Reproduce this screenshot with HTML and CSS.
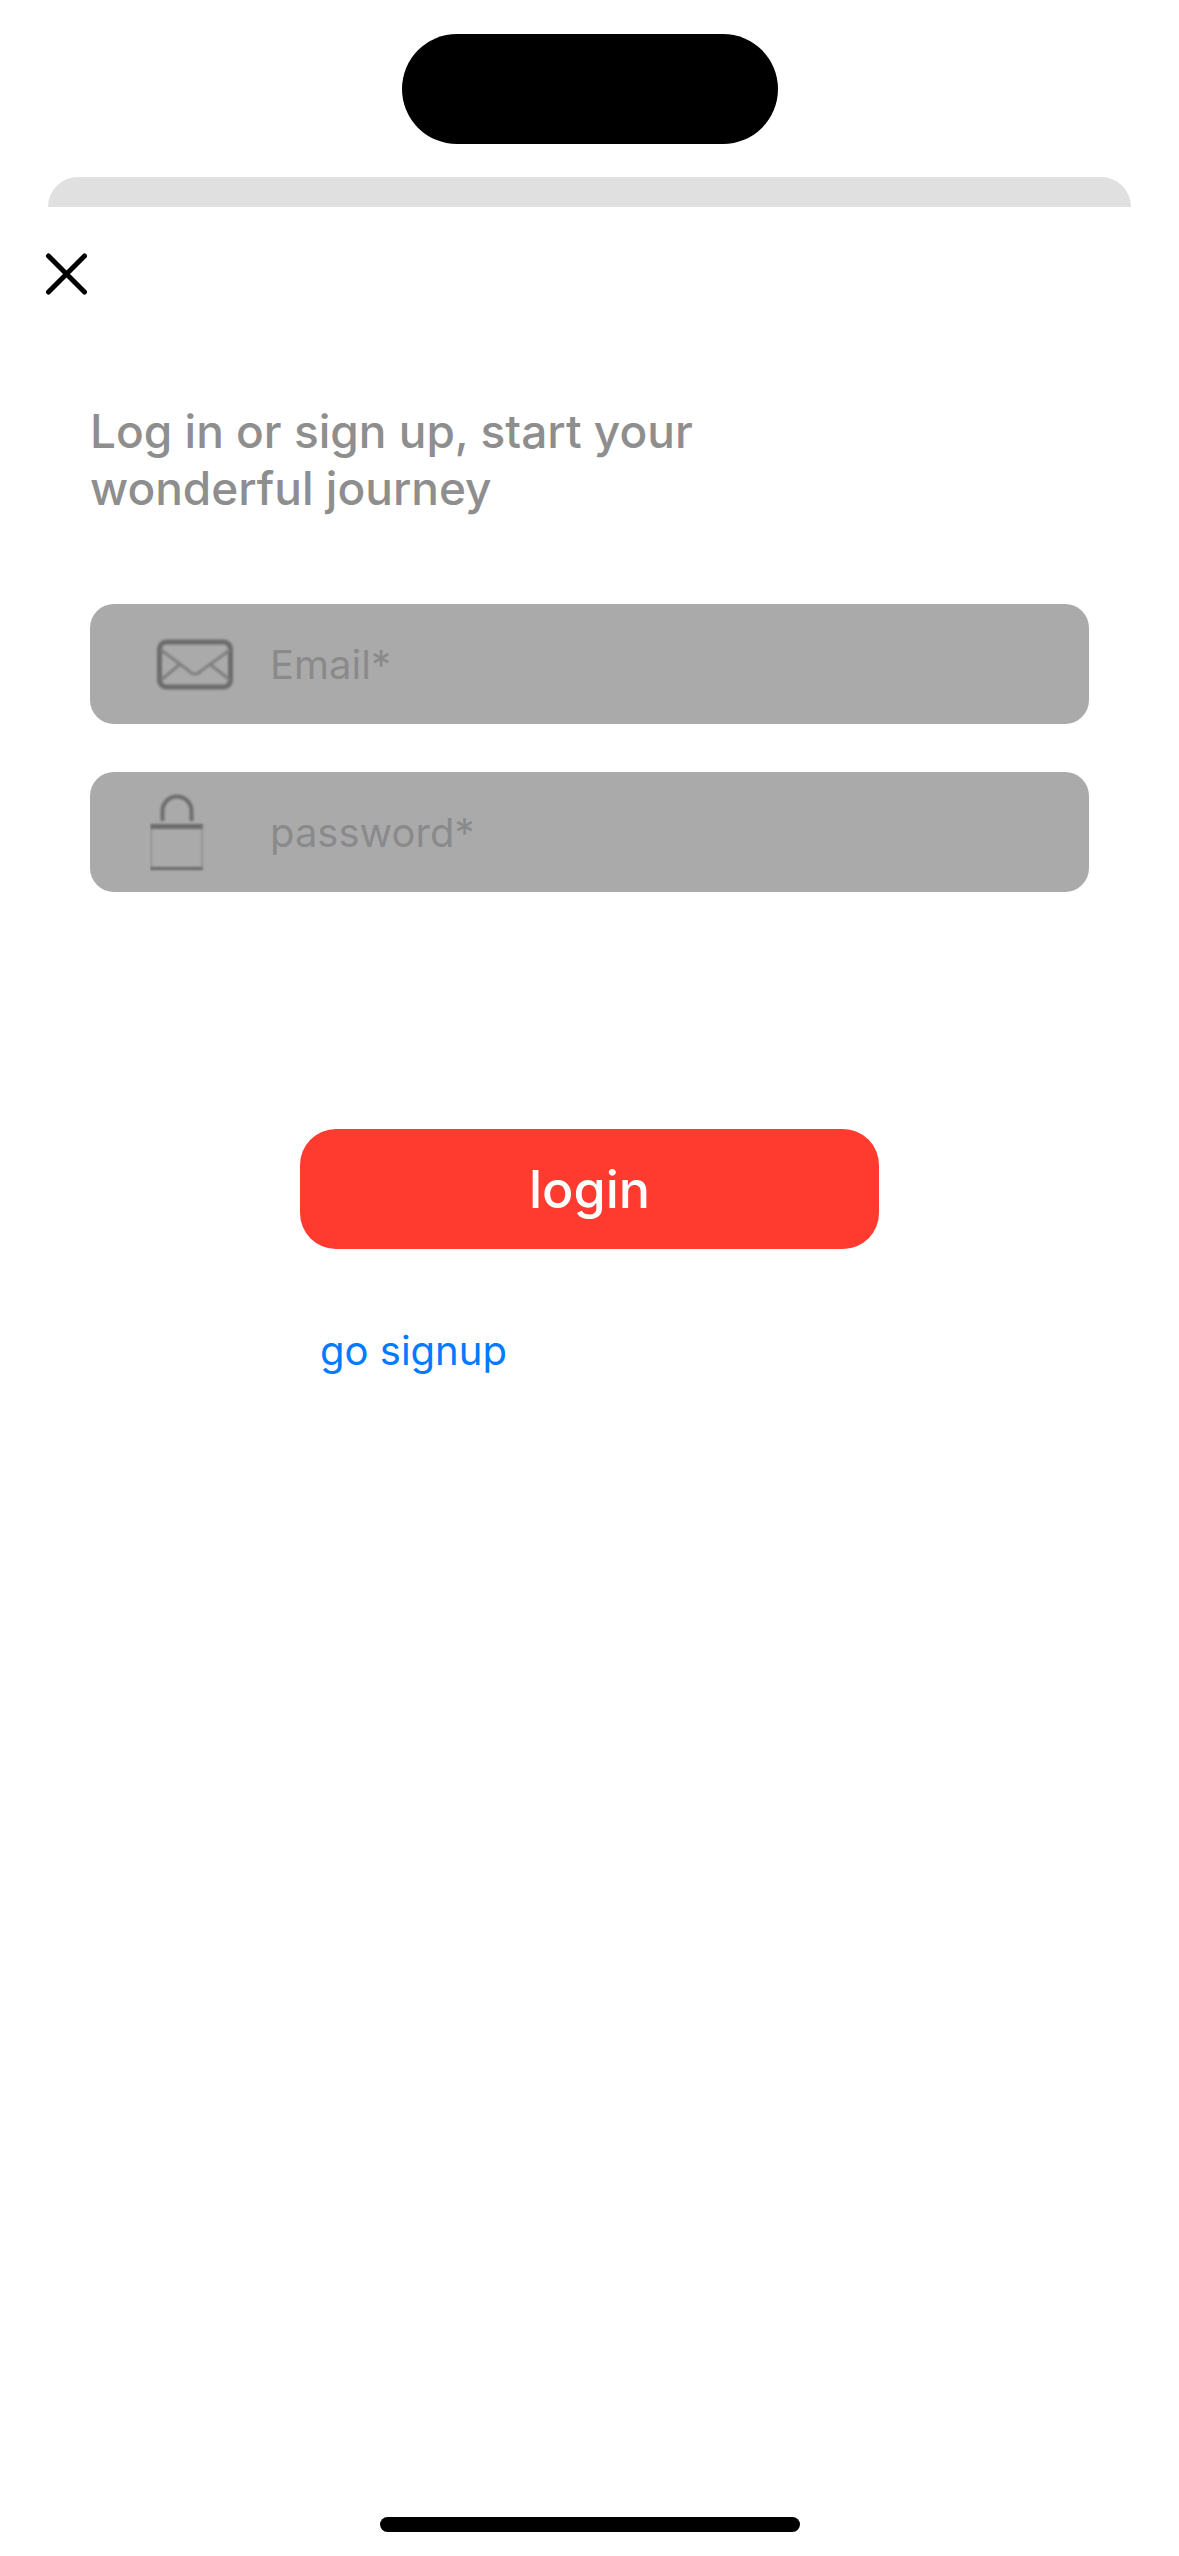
FILE: index.html
```html
<!DOCTYPE html>
<html lang="en">
<head>
  <meta charset="utf-8">
  <meta name="viewport" content="width=device-width, initial-scale=1">
  <title>Log in</title>
  <link rel="stylesheet" href="styles.css">
</head>
<body class="screen">
  <header class="status-bar">
    <div class="island"></div>
  </header>
  <div class="sheet-behind"></div>

  <main class="sheet">
    <button class="close" type="button" aria-label="Close">
      <svg class="close-icon" viewBox="0 0 42 42" aria-hidden="true">
        <path d="M3.500 3 39.500 39M39.500 3 3.500 39"/>
      </svg>
    </button>

    <form class="login-form">
      <h1 class="title">Log in or sign up, start your wonderful journey</h1>

      <div class="fields">
        <label class="field">
          <svg class="field-icon" viewBox="0 0 90 120" aria-hidden="true">
            <g class="soft">
              <rect class="heavy" x="9.500" y="38" width="71" height="45" rx="7"/>
              <path class="light" d="M11 46 38 66Q45 74 52 66L80 46M11 76 29 61M80 76 61 61"/>
            </g>
          </svg>
          <input class="field-input" type="email" placeholder="Email*" aria-label="Email">
        </label>
        <label class="field">
          <svg class="field-icon" viewBox="0 0 90 120" aria-hidden="true">
            <g class="soft">
              <path class="shackle" d="M12.500 49V39a14.500 14.500 0 0 1 29 0V49"/>
              <path class="heavy" d="M0 54.500H53"/>
              <path class="base" d="M0 96.500H53"/>
              <path class="side" d="M1 54V97M52 54V97"/>
            </g>
          </svg>
          <input class="field-input" type="password" placeholder="password*" aria-label="Password">
        </label>
      </div>

      <div class="actions">
        <button class="login" type="submit">login</button>
        <a class="signup" href="#signup">go signup</a>
      </div>
    </form>
  </main>

  <div class="home-indicator"></div>
</body>
</html>
```
FILE: styles.css
```css
* {
  box-sizing: border-box;
}

.screen {
  display: flex;
  flex-direction: column;
  min-height: 100vh;
  margin: 0;
  background: #fff;
  font-family: Inter, "Liberation Sans", sans-serif;
}

.status-bar {
  display: flex;
  justify-content: center;
  padding: 34px 0 33px;
}

.island {
  width: 376px;
  height: 110px;
  border-radius: 55px;
  background: #000;
}

.sheet-behind {
  height: 30px;
  margin: 0 48px;
  border-radius: 30px 30px 0 0;
  background: #e0e0e0;
}

.sheet {
  flex: 1;
  padding: 46px 45px 0;
}

.close {
  display: block;
  padding: 0;
  border: 0;
  background: none;
}

.close-icon {
  display: block;
  width: 42px;
  height: 42px;
  fill: none;
  stroke: #000;
  stroke-width: 5;
  stroke-linecap: round;
}

.login-form {
  padding: 108px 45px 0;
}

.title {
  max-width: 660px;
  margin: 0;
  color: #8e8e8e;
  font-size: 46px;
  font-weight: 500;
  line-height: 57px;
}

.fields {
  display: grid;
  gap: 48px;
  margin-top: 87px;
}

.field {
  display: flex;
  gap: 30px;
  height: 120px;
  padding-left: 60px;
  border-radius: 24px;
  background: #aaa;
}

.field-icon {
  flex: none;
  width: 90px;
  height: 120px;
  fill: none;
}

.soft {
  filter: blur(1px);
}

.heavy {
  stroke: #6c6c6c;
  stroke-width: 5;
}

.light {
  stroke: #808080;
  stroke-width: 3;
}

.shackle {
  stroke: #6e6e6e;
  stroke-width: 4;
}

.base {
  stroke: #686868;
  stroke-width: 3;
}

.side {
  stroke: #808080;
  stroke-width: 1;
}

.field-input {
  flex: 1;
  min-width: 0;
  padding: 0;
  border: 0;
  outline: 0;
  background: none;
  color: #000;
  font: 400 40px Inter, "Liberation Sans", sans-serif;
}

.field-input::placeholder {
  color: #8a8a8c;
  opacity: 1;
}

.actions {
  display: grid;
  justify-items: start;
  row-gap: 78px;
  margin: 237px 210px 0;
}

.login {
  width: 100%;
  height: 120px;
  padding: 0;
  border: 0;
  border-radius: 36px;
  background: #ff3b30;
  color: #fff;
  font: 500 52px Inter, "Liberation Sans", sans-serif;
}

.signup {
  margin-left: 20px;
  color: #007aff;
  font-size: 40px;
  line-height: 48px;
  text-decoration: none;
}

.home-indicator {
  width: 420px;
  height: 15px;
  margin: 0 auto 24px;
  border-radius: 8px;
  background: #000;
}
```
